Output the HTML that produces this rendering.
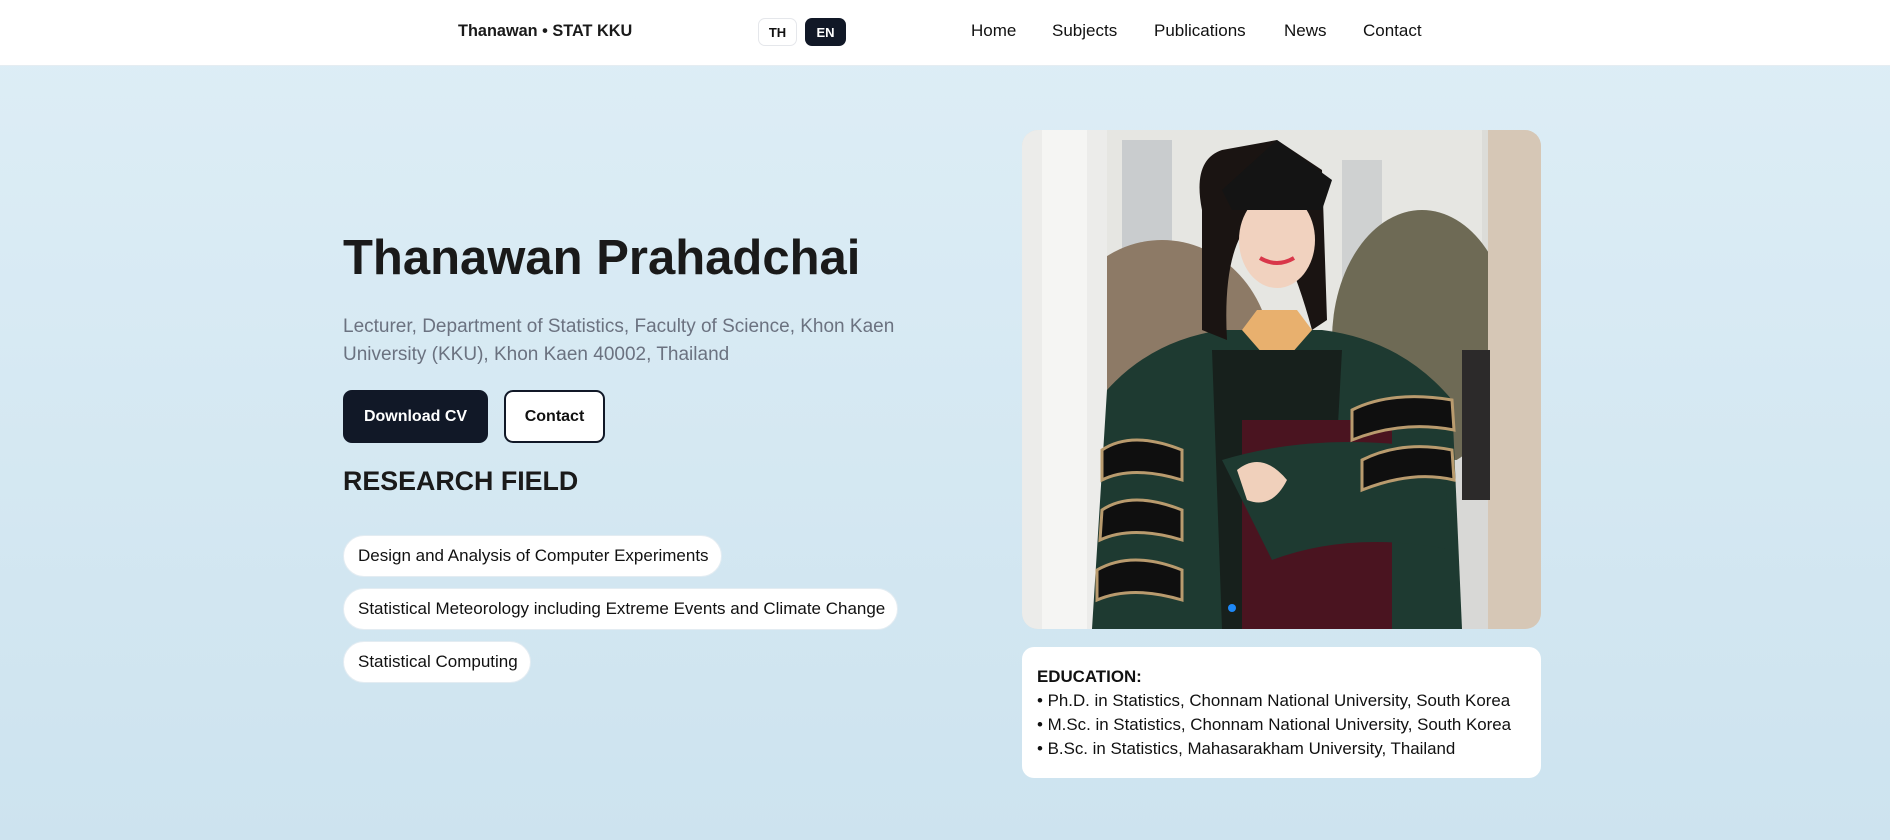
<!DOCTYPE html>
<html><head><meta charset="utf-8"><style>
*{margin:0;padding:0;box-sizing:border-box}
body{width:1890px;height:840px;overflow:hidden;font-family:"Liberation Sans",sans-serif;background:linear-gradient(180deg,#deeef6 0%,#cde3ef 100%);color:#111}
.nav{position:absolute;left:0;top:0;width:1890px;height:66px;background:#fff;border-bottom:1px solid #e5edf2}
.brand{position:absolute;left:458px;top:22px;font-weight:700;font-size:16.3px;color:#1a1a1a}
.lang{position:absolute;top:18px;height:28px;border-radius:7px;font-size:13px;font-weight:700;display:flex;align-items:center;justify-content:center}
.links a{position:absolute;top:21px;font-size:17px;color:#111;text-decoration:none}
h1{position:absolute;left:343px;top:230px;font-size:49px;font-weight:700;color:#1a1a1a}
.sub{position:absolute;left:343px;top:313px;width:600px;font-size:19px;line-height:28px;color:#6b7280}
.btn{position:absolute;top:390px;height:53px;border-radius:9px;font-size:16px;font-weight:700;display:flex;align-items:center;justify-content:center}
h2{position:absolute;left:343px;top:466px;font-size:26.8px;font-weight:700;color:#1a1a1a}
.pill{position:absolute;left:343px;height:42px;border-radius:21px;background:#fff;border:1px solid #e3ecf2;font-size:17px;display:flex;align-items:center;padding-left:14px;color:#111;white-space:nowrap}
.photo{position:absolute;left:1022px;top:130px;width:519px;height:499px;border-radius:16px;overflow:hidden}
.edu{position:absolute;left:1022px;top:647px;width:519px;height:131px;background:#fff;border-radius:12px;padding:18px 0 0 15px;font-size:16.9px;line-height:24px;color:#111;white-space:nowrap}
</style></head><body>
<div class="nav">
<div class="brand">Thanawan • STAT KKU</div>
<div class="lang" style="left:758px;width:39px;border:1px solid #e5e7eb;color:#111">TH</div>
<div class="lang" style="left:805px;width:41px;background:#111827;color:#fff">EN</div>
<div class="links"><a style="left:971px">Home</a><a style="left:1052px">Subjects</a><a style="left:1154px">Publications</a><a style="left:1284px">News</a><a style="left:1363px">Contact</a></div>
</div>
<h1>Thanawan Prahadchai</h1>
<div class="sub">Lecturer, Department of Statistics, Faculty of Science, Khon Kaen University (KKU), Khon Kaen 40002, Thailand</div>
<div class="btn" style="left:343px;width:145px;background:#111827;color:#fff">Download CV</div>
<div class="btn" style="left:504px;width:101px;background:#fff;border:2px solid #111827;color:#111">Contact</div>
<h2>RESEARCH FIELD</h2>
<div class="pill" style="top:535px;width:379px">Design and Analysis of Computer Experiments</div>
<div class="pill" style="top:588px;width:555px">Statistical Meteorology including Extreme Events and Climate Change</div>
<div class="pill" style="top:641px;width:188px">Statistical Computing</div>
<div class="photo"><svg width="519" height="499" viewBox="0 0 519 499">
<rect width="519" height="499" fill="#dcdcd8"/>
<rect x="80" y="0" width="380" height="200" fill="#e6e6e2"/>
<rect x="100" y="10" width="50" height="160" fill="#c9ccce"/>
<rect x="320" y="30" width="40" height="140" fill="#cfd1d1"/>
<ellipse cx="140" cy="230" rx="110" ry="120" fill="#8d7a66"/>
<ellipse cx="400" cy="210" rx="90" ry="130" fill="#6e6a55"/>
<rect x="80" y="330" width="400" height="170" fill="#d8d8d6"/>
<rect x="0" y="0" width="85" height="499" fill="#ececea"/>
<rect x="20" y="0" width="45" height="499" fill="#f5f5f3"/>
<rect x="466" y="0" width="53" height="499" fill="#d6c7b6"/>
<rect x="440" y="220" width="28" height="150" fill="#2c2a2a"/>
<path d="M70 499 L85 260 Q130 210 200 200 L300 200 Q380 210 430 270 L440 499 Z" fill="#1e3a31"/>
<path d="M220 200 L255 240 L290 200 L275 180 L235 180 Z" fill="#e8b06e"/>
<path d="M190 220 L320 220 L305 499 L200 499 Z" fill="#17201c"/>
<rect x="220" y="290" width="150" height="209" fill="#4a1420"/>
<path d="M80 320 Q110 300 160 320 L160 350 Q110 335 80 350Z M80 380 Q110 360 160 380 L160 410 Q110 395 78 410Z M75 440 Q110 420 160 440 L160 470 Q110 455 75 470Z" fill="#0f0f0f" stroke="#b99b6e" stroke-width="3"/>
<path d="M200 330 Q300 300 420 320 L430 420 Q330 400 250 430 Z" fill="#1e3a31"/>
<path d="M330 280 Q370 260 430 270 L432 300 Q380 290 330 310Z M340 330 Q380 310 430 320 L432 350 Q390 340 340 360Z" fill="#0f0f0f" stroke="#b99b6e" stroke-width="3"/>
<path d="M180 80 Q170 30 200 20 L255 10 L300 40 L305 190 L290 200 Q260 90 230 90 Q200 120 205 210 L180 200Z" fill="#1a1412"/>
<ellipse cx="255" cy="110" rx="38" ry="48" fill="#f1d2bf"/>
<path d="M200 60 L255 10 L310 50 L300 80 L210 80Z" fill="#141414"/>
<path d="M238 128 Q255 138 272 128" stroke="#d9374a" stroke-width="4" fill="none"/>
<path d="M215 340 Q240 320 265 350 Q250 380 225 370Z" fill="#f0d0bb"/>
<circle cx="210" cy="478" r="4" fill="#1e88f7"/>
</svg></div>
<div class="edu"><b>EDUCATION:</b><br>• Ph.D. in Statistics, Chonnam National University, South Korea<br>• M.Sc. in Statistics, Chonnam National University, South Korea<br>• B.Sc. in Statistics, Mahasarakham University, Thailand</div>
</body></html>
